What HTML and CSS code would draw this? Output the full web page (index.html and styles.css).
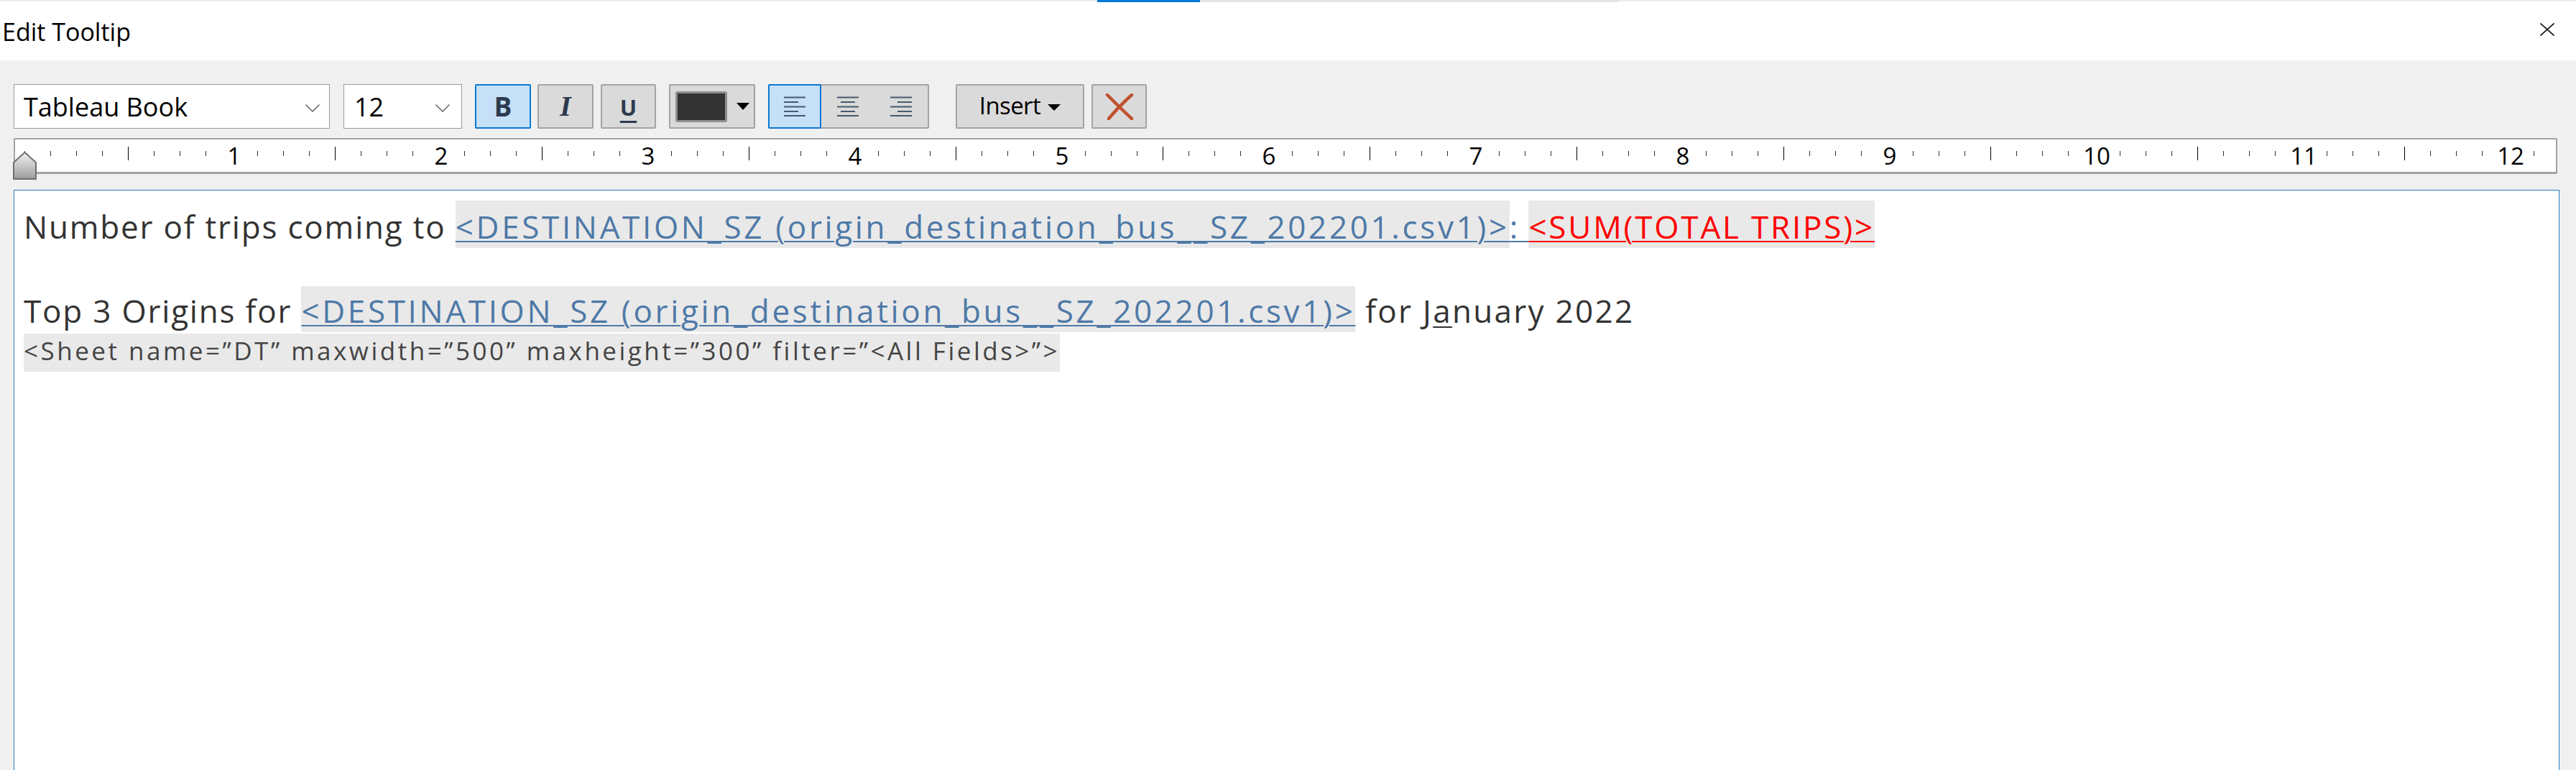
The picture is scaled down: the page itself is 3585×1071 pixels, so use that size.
FILE: index.html
```html
<!DOCTYPE html>
<html>
<head>
<meta charset="utf-8">
<title>Edit Tooltip</title>
<link rel="stylesheet" href="styles.css">
</head>
<body>
<div class="window">
  <div class="topstrip"><span class="seg-a"></span><span class="seg-blue"></span><span class="seg-grey"></span><span class="seg-b"></span></div>
  <div class="titlebar">
    <span class="title">Edit Tooltip</span>
    <svg class="close" width="20" height="18" viewBox="0 0 20 18"><path d="M0.5 0.5 L19.5 17.5 M19.5 0.5 L0.5 17.5" stroke="#111" stroke-width="1.6" fill="none"/></svg>
  </div>
  <div class="toolbar">
    <div class="combo font-combo"><span>Tableau Book</span><svg class="chev" width="20" height="11" viewBox="0 0 20 11"><path d="M0.5 0.5 L10 10 L19.5 0.5" stroke="#555" stroke-width="1.3" fill="none"/></svg></div>
    <div class="combo size-combo"><span>12</span><svg class="chev" width="20" height="11" viewBox="0 0 20 11"><path d="M0.5 0.5 L10 10 L19.5 0.5" stroke="#555" stroke-width="1.3" fill="none"/></svg></div>
    <div class="btn on bold-btn"><span class="g-b">B</span></div>
    <div class="btn ital-btn"><span class="g-i">I</span></div>
    <div class="btn under-btn"><span class="g-u">U</span></div>
    <div class="btn color-btn"><span class="swatch"></span><span class="tri"></span></div>
    <div class="align-group">
      <div class="cell on"><svg width="30" height="28" viewBox="0 0 30 28"><g stroke="#48596f" stroke-width="2.2"><path d="M0 1.5H30M0 8H20M0 14.5H30M0 21H20M0 27H30"/></g></svg></div>
      <div class="cell"><svg width="30" height="28" viewBox="0 0 30 28"><g stroke="#48596f" stroke-width="2.2"><path d="M0 1.5H30M5 8H25M0 14.5H30M5 21H25M0 27H30"/></g></svg></div>
      <div class="cell"><svg width="30" height="28" viewBox="0 0 30 28"><g stroke="#48596f" stroke-width="2.2"><path d="M0 1.5H30M10 8H30M0 14.5H30M10 21H30M0 27H30"/></g></svg></div>
    </div>
    <div class="btn insert-btn"><span>Insert</span><span class="tri small"></span></div>
    <div class="btn clear-btn"><svg width="40" height="37" viewBox="0 0 40 37"><path d="M3 2 C14 13 25 24 37 35 M37 2 C26 12 15 23 5 35" stroke="#c0512f" stroke-width="4.5" stroke-linecap="round" fill="none"/></svg></div>
  </div>
  <div class="ruler-row">
    <div class="ruler">
      <div class="nums">
        <div class="unit"><span class="lbl"><b>1</b></span></div>
        <div class="unit"><span class="lbl"><b>2</b></span></div>
        <div class="unit"><span class="lbl"><b>3</b></span></div>
        <div class="unit"><span class="lbl"><b>4</b></span></div>
        <div class="unit"><span class="lbl"><b>5</b></span></div>
        <div class="unit"><span class="lbl"><b>6</b></span></div>
        <div class="unit"><span class="lbl"><b>7</b></span></div>
        <div class="unit"><span class="lbl"><b>8</b></span></div>
        <div class="unit"><span class="lbl"><b>9</b></span></div>
        <div class="unit"><span class="lbl"><b>10</b></span></div>
        <div class="unit"><span class="lbl"><b>11</b></span></div>
        <div class="unit"><span class="lbl"><b>12</b></span></div>
      </div>
      <svg class="indent" width="33" height="39" viewBox="0 0 33 39">
        <defs><linearGradient id="ig" x1="0" y1="0" x2="0" y2="1"><stop offset="0" stop-color="#f2f2f2"/><stop offset="1" stop-color="#9c9c9c"/></linearGradient></defs>
        <path d="M16.5 1 L32 15 L32 38 L1 38 L1 15 Z" fill="url(#ig)" stroke="#6f6f6f" stroke-width="2" stroke-linejoin="round"/>
      </svg>
    </div>
  </div>
  <div class="editor">
    <div class="line l1">Number of trips coming to <span class="field f1">&lt;DESTINATION_SZ (origin_destination_bus__SZ_202201.csv1)&gt;</span><span class="sep">: </span><span class="field f1 red">&lt;SUM(TOTAL TRIPS)&gt;</span></div>
    <div class="line blank"></div>
    <div class="line l2">Top 3 Origins for <span class="field f2">&lt;DESTINATION_SZ (origin_destination_bus__SZ_202201.csv1)&gt;</span><span class="tail"> for J<span class="caret">a</span>nuary 2022</span></div>
    <div class="line l3"><span class="code">&lt;Sheet name=”DT” maxwidth=”500” maxheight=”300” filter=”&lt;All Fields&gt;”&gt;</span></div>
  </div>
</div>
</body>
</html>
```
FILE: styles.css
```css
* { box-sizing: border-box; margin: 0; padding: 0; }
html, body {
  width: 3585px;
  height: 1071px;
  overflow: hidden;
  background: #f0f0f0;
  font-family: "Open Sans", "Noto Sans", sans-serif;
}
.window { display: flex; flex-direction: column; height: 1071px; }

.topstrip { display: flex; height: 3px; background: #fff; flex: 0 0 3px; }
.seg-a { width: 1527px; height: 2px; background: #ececec; }
.seg-blue { width: 143px; height: 3px; background: #0078d7; }
.seg-grey { width: 583px; height: 3px; background: #e4e4e4; }
.seg-b { flex: 1; height: 2px; background: #ececec; }

.titlebar {
  flex: 0 0 81px;
  background: #fff;
  display: flex;
  justify-content: space-between;
  align-items: flex-start;
  padding: 21px 30px 0 3px;
}
.title { font-size: 34px; line-height: 40px; color: #000; }
.close { margin-top: 8px; }

.toolbar {
  flex: 0 0 108px;
  display: flex;
  align-items: flex-start;
  padding: 33px 0 0 19px;
}
.combo {
  height: 62px;
  background: #fff;
  border: 1px solid #9a9a9a;
  display: flex;
  align-items: center;
  justify-content: space-between;
  font-size: 36px;
  color: #000;
}
.font-combo { width: 440px; padding: 0 13px 0 13px; }
.size-combo { width: 165px; margin-left: 19px; padding: 0 16px 0 14px; }
.chev { margin-top: 4px; }

.btn {
  height: 62px;
  width: 78px;
  background: #dadada;
  border: 2px solid #a3a3a3;
  border-radius: 2px;
  display: flex;
  align-items: center;
  justify-content: center;
  color: #2d3a4f;
}
.btn.on { background: #c5e0f7; border-color: #0a78d4; }
.bold-btn { margin-left: 18px; }
.ital-btn { margin-left: 9px; }
.under-btn { margin-left: 10px; width: 77px; }
.g-b { font-weight: 700; font-size: 37px; line-height: 1; margin-top: -2px; }
.g-i { font-family: "Liberation Serif", serif; font-weight: 700; font-style: italic; font-size: 40px; line-height: 1; }
.g-u {
  font-weight: 700; font-size: 31px; line-height: 1;
  text-decoration: underline; text-decoration-thickness: 3px; text-underline-offset: 7px;
  margin-top: 2px;
}
.color-btn { margin-left: 18px; width: 120px; justify-content: flex-start; padding-left: 7px; }
.swatch {
  width: 72px; height: 43px;
  background: #333;
  border: 3px solid #8e8e8e;
  border-radius: 3px;
}
.tri {
  width: 0; height: 0;
  margin-left: 13px;
  border-left: 9px solid transparent;
  border-right: 9px solid transparent;
  border-top: 10px solid #000;
}
.tri.small { margin-left: 10px; border-top-width: 9px; margin-top: 2px; }

.align-group {
  margin-left: 18px;
  width: 224px;
  height: 62px;
  display: flex;
  background: #dadada;
  border: 2px solid #a3a3a3;
  border-radius: 2px;
}
.cell { flex: 1; display: flex; align-items: center; justify-content: center; }
.cell.on {
  flex: 0 0 74px;
  margin: -2px 0 -2px -2px;
  background: #c5e0f7;
  border: 2px solid #0a78d4;
  border-radius: 2px;
}
.insert-btn { margin-left: 37px; width: 179px; color: #000; font-size: 33px; letter-spacing: -0.6px; }
.insert-btn span:first-child { line-height: 1; margin-top: -4px; }
.clear-btn { margin-left: 10px; width: 77px; }

.ruler-row { flex: 0 0 72px; padding-left: 19px; }
.ruler {
  position: relative;
  width: 3540px;
  height: 50px;
  border: 2px solid #a3a3a3;
  border-bottom-width: 3px;
  background-color: #fff;
  background-image:
    linear-gradient(to right, #000 1px, transparent 1px),
    linear-gradient(to right, #333 1px, transparent 1px);
  background-size: 288px 19px, 36px 7px;
  background-position: 157px 10px, 13px 16px;
  background-repeat: repeat-x, repeat-x;
}
.nums { display: flex; padding: 1px 0 0 13px; height: 100%; }
.unit { flex: 0 0 288px; display: flex; justify-content: flex-end; }
.lbl {
  width: 0;
  margin-right: -4px;
  display: flex;
  justify-content: center;
  font-size: 33px;
  line-height: 44px;
  color: #000;
}
.lbl b { font-weight: 400; background: #fff; padding: 0 2px; }
.indent { position: absolute; left: -3px; top: 17px; }

.editor {
  margin-left: 19px;
  width: 3543px;
  height: 820px;
  flex: 0 0 820px;
  background: #fff;
  border: 1px solid #2a7cc0;
  padding: 20px 0 0 13px;
  color: #333;
}
.line { white-space: nowrap; }
.l1 { font-size: 44px; line-height: 60px; height: 60px; letter-spacing: 1.8px; }
.blank { height: 58px; }
.l2 { font-size: 44px; line-height: 58px; height: 58px; letter-spacing: 1.8px; }
.tail { letter-spacing: 2.3px; }
.l3 { font-size: 35px; line-height: 54px; height: 54px; color: #444; letter-spacing: 3.5px; }

.field {
  background: #e9e9e9;
  color: #4e79a7;
  text-decoration: underline;
  text-decoration-thickness: 2px;
  text-underline-offset: 3px;
  letter-spacing: 3.65px;
}
.f1 { padding-top: 6px; }
.f2 { padding-top: 4px; }
.field.red { color: #f00; letter-spacing: 2.8px; }
.sep {
  color: #4e79a7;
  text-decoration: underline;
  text-decoration-thickness: 2px;
  text-underline-offset: 3px;
}
.caret { text-decoration: underline; text-decoration-thickness: 2px; text-underline-offset: 5px; }
.code { background: #e9e9e9; padding-bottom: 6px; }
```
